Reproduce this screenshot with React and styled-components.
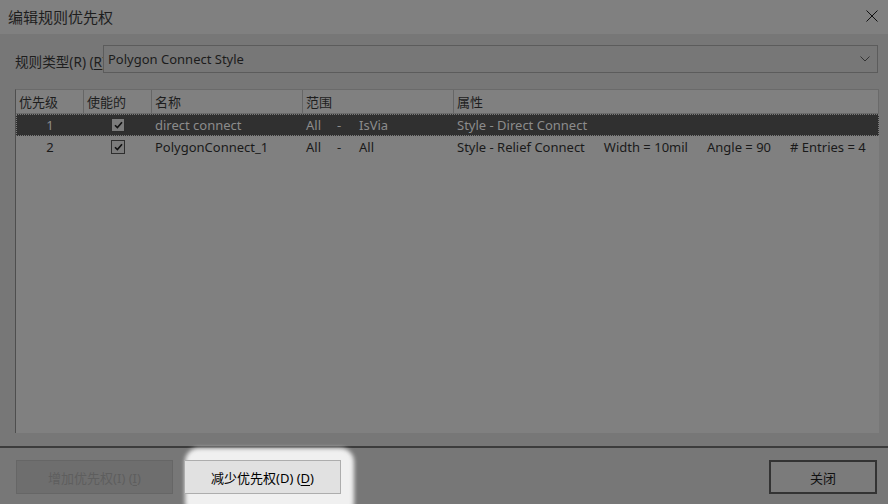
import React from "react";
import styled, { createGlobalStyle } from "styled-components";

const GlobalStyle = createGlobalStyle`
  html, body {
    margin: 0;
    padding: 0;
    background: #777777;
    overflow: hidden;
  }
  body {
    font-family: "Noto Sans", "Noto Sans CJK SC", sans-serif;
  }
`;

const rules = [
  {
    priority: 1,
    enabled: true,
    name: "direct connect",
    scope: ["All", "-", "IsVia"],
    attrs: ["Style - Direct Connect"],
    selected: true,
  },
  {
    priority: 2,
    enabled: true,
    name: "PolygonConnect_1",
    scope: ["All", "-", "All"],
    attrs: ["Style - Relief Connect", "Width = 10mil", "Angle = 90", "# Entries = 4"],
  },
];

const columns = [
  { label: "优先级", width: 68 },
  { label: "使能的", width: 68 },
  { label: "名称", width: 151 },
  { label: "范围", width: 151 },
  { label: "属性", width: null },
];

const CheckIcon = () => (
  <svg width="9" height="8" viewBox="0 0 9 8">
    <path d="M1 4.2 L3.4 6.6 L8 1.2" fill="none" stroke="#111" strokeWidth="1.6" />
  </svg>
);

const RulePriorityDialog = () => {
  return (
    <Dialog>
      <GlobalStyle />
      <TitleBar>
        <Title>编辑规则优先权</Title>
        <CloseButton aria-label="close">
          <svg width="12" height="12" viewBox="0 0 12 12">
            <path d="M0.5 0.5 L11.5 11.5 M11.5 0.5 L0.5 11.5" stroke="#111" strokeWidth="1" />
          </svg>
        </CloseButton>
      </TitleBar>

      <Body>
        <TypeRow>
          <TypeLabel>
            规则类型(R) (<u>R</u>)
          </TypeLabel>
          <Combo>
            <span>Polygon Connect Style</span>
            <svg width="10" height="6" viewBox="0 0 10 6">
              <path d="M0.5 0.5 L5 5 L9.5 0.5" fill="none" stroke="#333" strokeWidth="1" />
            </svg>
          </Combo>
        </TypeRow>

        <ListView>
          <HeaderRow>
            {columns.map((c) => (
              <HeaderCell key={c.label} $width={c.width}>
                {c.label}
              </HeaderCell>
            ))}
          </HeaderRow>
          {rules.map((r) => (
            <Row key={r.priority} $selected={r.selected}>
              <Cell $width={68} $center>
                {r.priority}
              </Cell>
              <Cell $width={68} $center>
                <CheckBox>{r.enabled && <CheckIcon />}</CheckBox>
              </Cell>
              <Cell $width={151}>{r.name}</Cell>
              <Cell $width={151}>
                <ScopePart $w={31}>{r.scope[0]}</ScopePart>
                <ScopePart $w={22}>{r.scope[1]}</ScopePart>
                <ScopePart>{r.scope[2]}</ScopePart>
              </Cell>
              <AttrCell>
                {r.attrs.map((a) => (
                  <span key={a}>{a}</span>
                ))}
              </AttrCell>
            </Row>
          ))}
        </ListView>
      </Body>

      <Footer>
        <Button disabled>
          增加优先权(I) (<u>I</u>)
        </Button>
        <Button $highlight>
          减少优先权(D) (<u>D</u>)
        </Button>
        <Spacer />
        <Button $default $wide>
          关闭
        </Button>
      </Footer>
    </Dialog>
  );
};

const Dialog = styled.div`
  display: flex;
  flex-direction: column;
  width: 888px;
  height: 504px;
  background: #777777;
  color: #1c1c1c;
  font-size: 13px;
  overflow: hidden;
`;

const TitleBar = styled.div`
  display: flex;
  align-items: center;
  justify-content: space-between;
  height: 34px;
  padding: 0 10px 0 8px;
  box-sizing: border-box;
  background: #808080;
  flex-shrink: 0;
`;

const Title = styled.div`
  font-family: "Noto Sans CJK SC", sans-serif;
  font-size: 15px;
  color: #1e1e1e;
  margin-top: -2px;
`;

const CloseButton = styled.div`
  display: flex;
  width: 12px;
  height: 12px;
  margin-top: -2px;
`;

const Body = styled.div`
  display: flex;
  flex-direction: column;
  padding: 11px 10px 13px 15px;
  border-bottom: 2px solid #3c3c3c;
  flex-shrink: 0;
`;

const TypeRow = styled.div`
  display: flex;
  align-items: center;
  height: 28px;
`;

const TypeLabel = styled.div`
  width: 88px;
  overflow: hidden;
  white-space: nowrap;
  font-family: "Noto Sans", "Noto Sans CJK SC", sans-serif;
  font-size: 13.6px;
  color: #1e1e1e;
  padding-top: 3px;

  u {
    text-underline-offset: 2px;
  }
`;

const Combo = styled.div`
  flex: 1;
  height: 28px;
  box-sizing: border-box;
  display: flex;
  align-items: center;
  justify-content: space-between;
  padding: 0 7px 0 4px;
  border: 1px solid #5c5c5c;
  background: #777777;
  font-size: 13px;
  color: #1c1c1c;
`;

const ListView = styled.div`
  margin-top: 16px;
  height: 344px;
  box-sizing: border-box;
  background: #808080;
  border-left: 1px solid #4e4e4e;
  border-top: 1px solid #6a6a6a;
  margin-right: -1px;
`;

const HeaderRow = styled.div`
  display: flex;
  height: 24px;
  box-sizing: border-box;
  border-bottom: 1px solid #6a6a6a;
  border-right: 1px solid #6a6a6a;
`;

const HeaderCell = styled.div`
  ${(p) => (p.$width ? `width: ${p.$width}px;` : "flex: 1;")}
  box-sizing: border-box;
  padding-left: 3px;
  display: flex;
  align-items: center;
  font-family: "Noto Sans CJK SC", sans-serif;
  font-size: 13px;
  color: #1e1e1e;
  border-right: 1px solid #666666;
  &:last-child {
    border-right: none;
  }
`;

const Row = styled.div`
  display: flex;
  height: 22px;
  align-items: center;
  background: ${(p) => (p.$selected ? "#303030" : "transparent")};
  color: ${(p) => (p.$selected ? "#8c8c8c" : "#1a1a1a")};
  outline: ${(p) => (p.$selected ? "1px dotted #7a7a7a" : "none")};
  outline-offset: -1px;
  font-size: 13px;
  white-space: nowrap;
`;

const Cell = styled.div`
  width: ${(p) => p.$width}px;
  box-sizing: border-box;
  padding-left: ${(p) => (p.$center ? "0" : "3px")};
  display: flex;
  align-items: center;
  justify-content: ${(p) => (p.$center ? "center" : "flex-start")};
`;

const ScopePart = styled.span`
  display: inline-block;
  ${(p) => (p.$w ? `width: ${p.$w}px;` : "")}
`;

const AttrCell = styled.div`
  flex: 1;
  display: flex;
  gap: 19px;
  padding-left: 3px;
`;

const CheckBox = styled.div`
  width: 14px;
  height: 14px;
  box-sizing: border-box;
  border: 1px solid #2e2e2e;
  background: #7c7c7c;
  display: flex;
  align-items: center;
  justify-content: center;
`;

const Footer = styled.div`
  position: relative;
  z-index: 0;
  display: flex;
  align-items: flex-start;
  gap: 11px;
  padding: 12px 11px 0 16px;
  flex: 1;
`;

const Spacer = styled.div`
  flex: 1;
`;

const Button = styled.button`
  width: ${(p) => (p.$wide ? "108px" : "157px")};
  height: 34px;
  box-sizing: border-box;
  font-family: "Noto Sans", "Noto Sans CJK SC", sans-serif;
  font-size: 13px;
  color: #111;
  background: #7b7b7b;
  border: ${(p) => (p.$default ? "2px solid #333333" : "1px solid #5c5c5c")};
  padding: 0;

  &:disabled {
    background: #6e6e6e;
    border: 1px solid #666666;
    color: #5e5e5e;
  }

  ${(p) =>
    p.$highlight &&
    `
    position: relative;
    background: #e1e1e1;
    border: 1px solid #adadad;
    color: #000;

    &::before {
      content: "";
      position: absolute;
      z-index: -1;
      top: -13px;
      left: 0;
      right: -14px;
      bottom: -24px;
      background: #f0f0f0;
      border-radius: 14px;
      filter: blur(2px);
    }
  `}

  u {
    text-underline-offset: 2px;
  }
`;

export default RulePriorityDialog;
